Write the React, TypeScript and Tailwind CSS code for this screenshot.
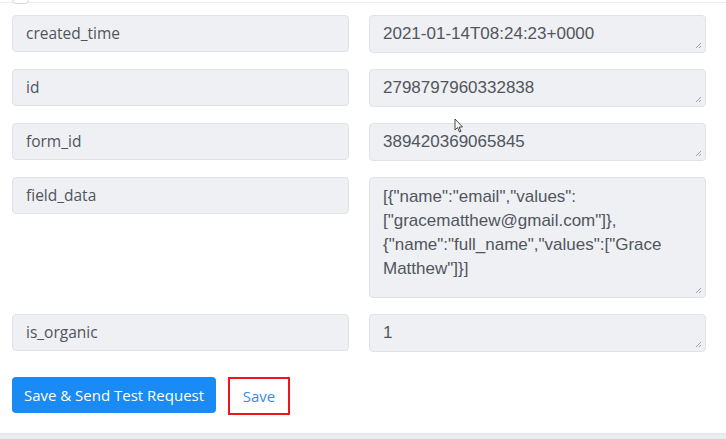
import { useState } from 'react'

type Row = { label: string; value: string; tall?: boolean }

const rows: Row[] = [
  { label: 'created_time', value: '2021-01-14T08:24:23+0000' },
  { label: 'id', value: '2798797960332838' },
  { label: 'form_id', value: '389420369065845' },
  {
    label: 'field_data',
    value: '[{"name":"email","values":["gracematthew@gmail.com"]},{"name":"full_name","values":["Grace Matthew"]}]',
    tall: true,
  },
  { label: 'is_organic', value: '1' },
]

function Grip() {
  return (
    <svg className="absolute right-[3px] bottom-[3px]" width="8" height="8" viewBox="0 0 8 8">
      <path d="M7 2 L2 7 M7 5 L5 7" stroke="#9ca3af" strokeWidth="1" fill="none" />
    </svg>
  )
}

export default function App() {
  const [values] = useState(rows)

  return (
    <div
      className="relative w-[726px] h-[439px] overflow-hidden bg-white"
      style={{ fontFamily: '"Open Sans", sans-serif' }}
    >
      {/* top remnant of previous section */}
      <div className="h-[3px] border-b border-[#eceef1] relative">
        <div className="absolute left-[12px] top-[-12px] w-[17px] h-[16px] rounded-[4px] border border-[#d5d8dd] bg-white" />
      </div>

      <div className="px-[12px] pr-[20px] pt-[12px] flex flex-col gap-[16px]">
        {values.map((r) => (
          <div key={r.label} className="grid grid-cols-[337px_337px] gap-[20px]">
            <div className="h-[37px] rounded-[4px] bg-[#eef0f4] border border-[#dfe2e7] px-[13px] flex items-center text-[15.5px] text-[#50555c]">
              {r.label}
            </div>
            <div
              className={`relative rounded-[4px] bg-[#eef0f4] border border-[#dfe2e7] pl-[13px] pr-[10px] text-[17px] text-[#52565c] leading-[24px] ${
                r.tall ? 'h-[121px] pt-[7px]' : 'h-[38px] pt-[6px]'
              }`}
              style={{ fontFamily: '"Liberation Sans", Arial, sans-serif' }}
            >
              <div className="break-all whitespace-normal">
                {r.tall ? (
                  <>
                    [{'{'}"name":"email","values":
                    <br />
                    ["gracematthew@gmail.com"]{'}'},
                    <br />
                    {'{'}"name":"full_name","values":["Grace
                    <br />
                    Matthew"]{'}'}]
                  </>
                ) : (
                  r.value
                )}
              </div>
              <Grip />
            </div>
          </div>
        ))}

        <div className="flex items-start gap-[12px] mt-[9px]">
          <button className="h-[36px] w-[204px] rounded-[4px] bg-[#1a8af5] text-white text-[15px] font-medium">
            Save &amp; Send Test Request
          </button>
          <button className="h-[38px] w-[62px] border-2 border-[#f0141e] text-[#3b8bed] text-[15px] font-medium">
            Save
          </button>
        </div>
      </div>

      {/* bottom band */}
      <div className="absolute left-0 right-0 bottom-0 h-[6px] bg-[#ebecef] border-t border-[#e2e4e8]" />

      {/* mouse cursor */}
      <svg className="absolute left-[454px] top-[118px]" width="10" height="15" viewBox="0 0 10 15">
        <path d="M1 1 L1 12 L3.5 9.5 L5.5 14 L7 13.3 L5 9 L8.5 9 Z" fill="white" stroke="#333" strokeWidth="0.9" />
      </svg>
    </div>
  )
}
